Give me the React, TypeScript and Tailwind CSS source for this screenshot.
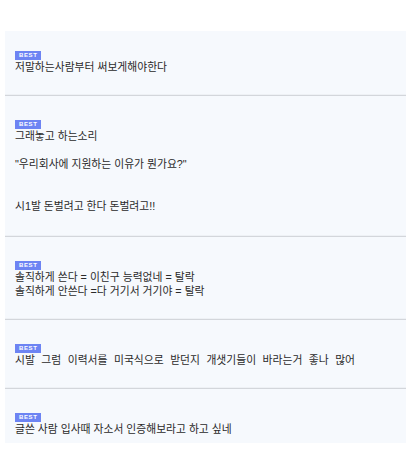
import React from "react";

const items: { lines: string[]; ws?: string }[] = [
  { lines: ["저말하는사람부터 써보게해야한다"] },
  { lines: ["그래놓고 하는소리", "", "\"우리회사에 지원하는 이유가 뭔가요?\"", "", "", "시1발 돈벌려고 한다 돈벌려고!!"] },
  { lines: ["솔직하게 쓴다 = 이친구 능력없네 = 탈락", "솔직하게 안쓴다 =다 거기서 거기야 = 탈락"] },
  { lines: ["시발 그럼 이력서를 미국식으로 받던지 개샛기들이 바라는거 좋나 많어"], ws: "wide" },
  { lines: ["글쓴 사람 입사때 자소서 인증해보라고 하고 싶네"] },
];

export default function App() {
  return (
    <div className="w-[406px] h-[459px] bg-white pt-[31px] pl-[5px]" style={{ fontFamily: "'Liberation Sans', 'Noto Sans CJK KR', sans-serif" }}>
      <div className="bg-[#f6f9fd] flex flex-col">
        {items.map((it, i) => (
          <div
            key={i}
            className={`pl-[10px] ${i === 0 ? "pt-[20px]" : "pt-[24px]"} ${i === items.length - 1 ? "pb-[7px]" : i === 1 ? "pb-[23px] border-b border-[#d3d6db] shadow-[0_-1px_0_#eef1f5_inset]" : "pb-[21px] border-b border-[#d3d6db] shadow-[0_-1px_0_#eef1f5_inset]"}`}
          >
            <div className="flex">
              <span className="bg-[#6d84f3] text-white text-[6px] font-bold leading-[9px] h-[9px] px-[4px] tracking-[0.6px]">BEST</span>
            </div>
            {it.lines.map((l, j) => (
              <div
                key={j}
                className={`text-[10.8px] leading-[14px] h-[14px] text-[#2a2a2a] whitespace-pre ${it.ws ? "[word-spacing:3.5px]" : ""}`}
              >
                {l}
              </div>
            ))}
          </div>
        ))}
      </div>
    </div>
  );
}
